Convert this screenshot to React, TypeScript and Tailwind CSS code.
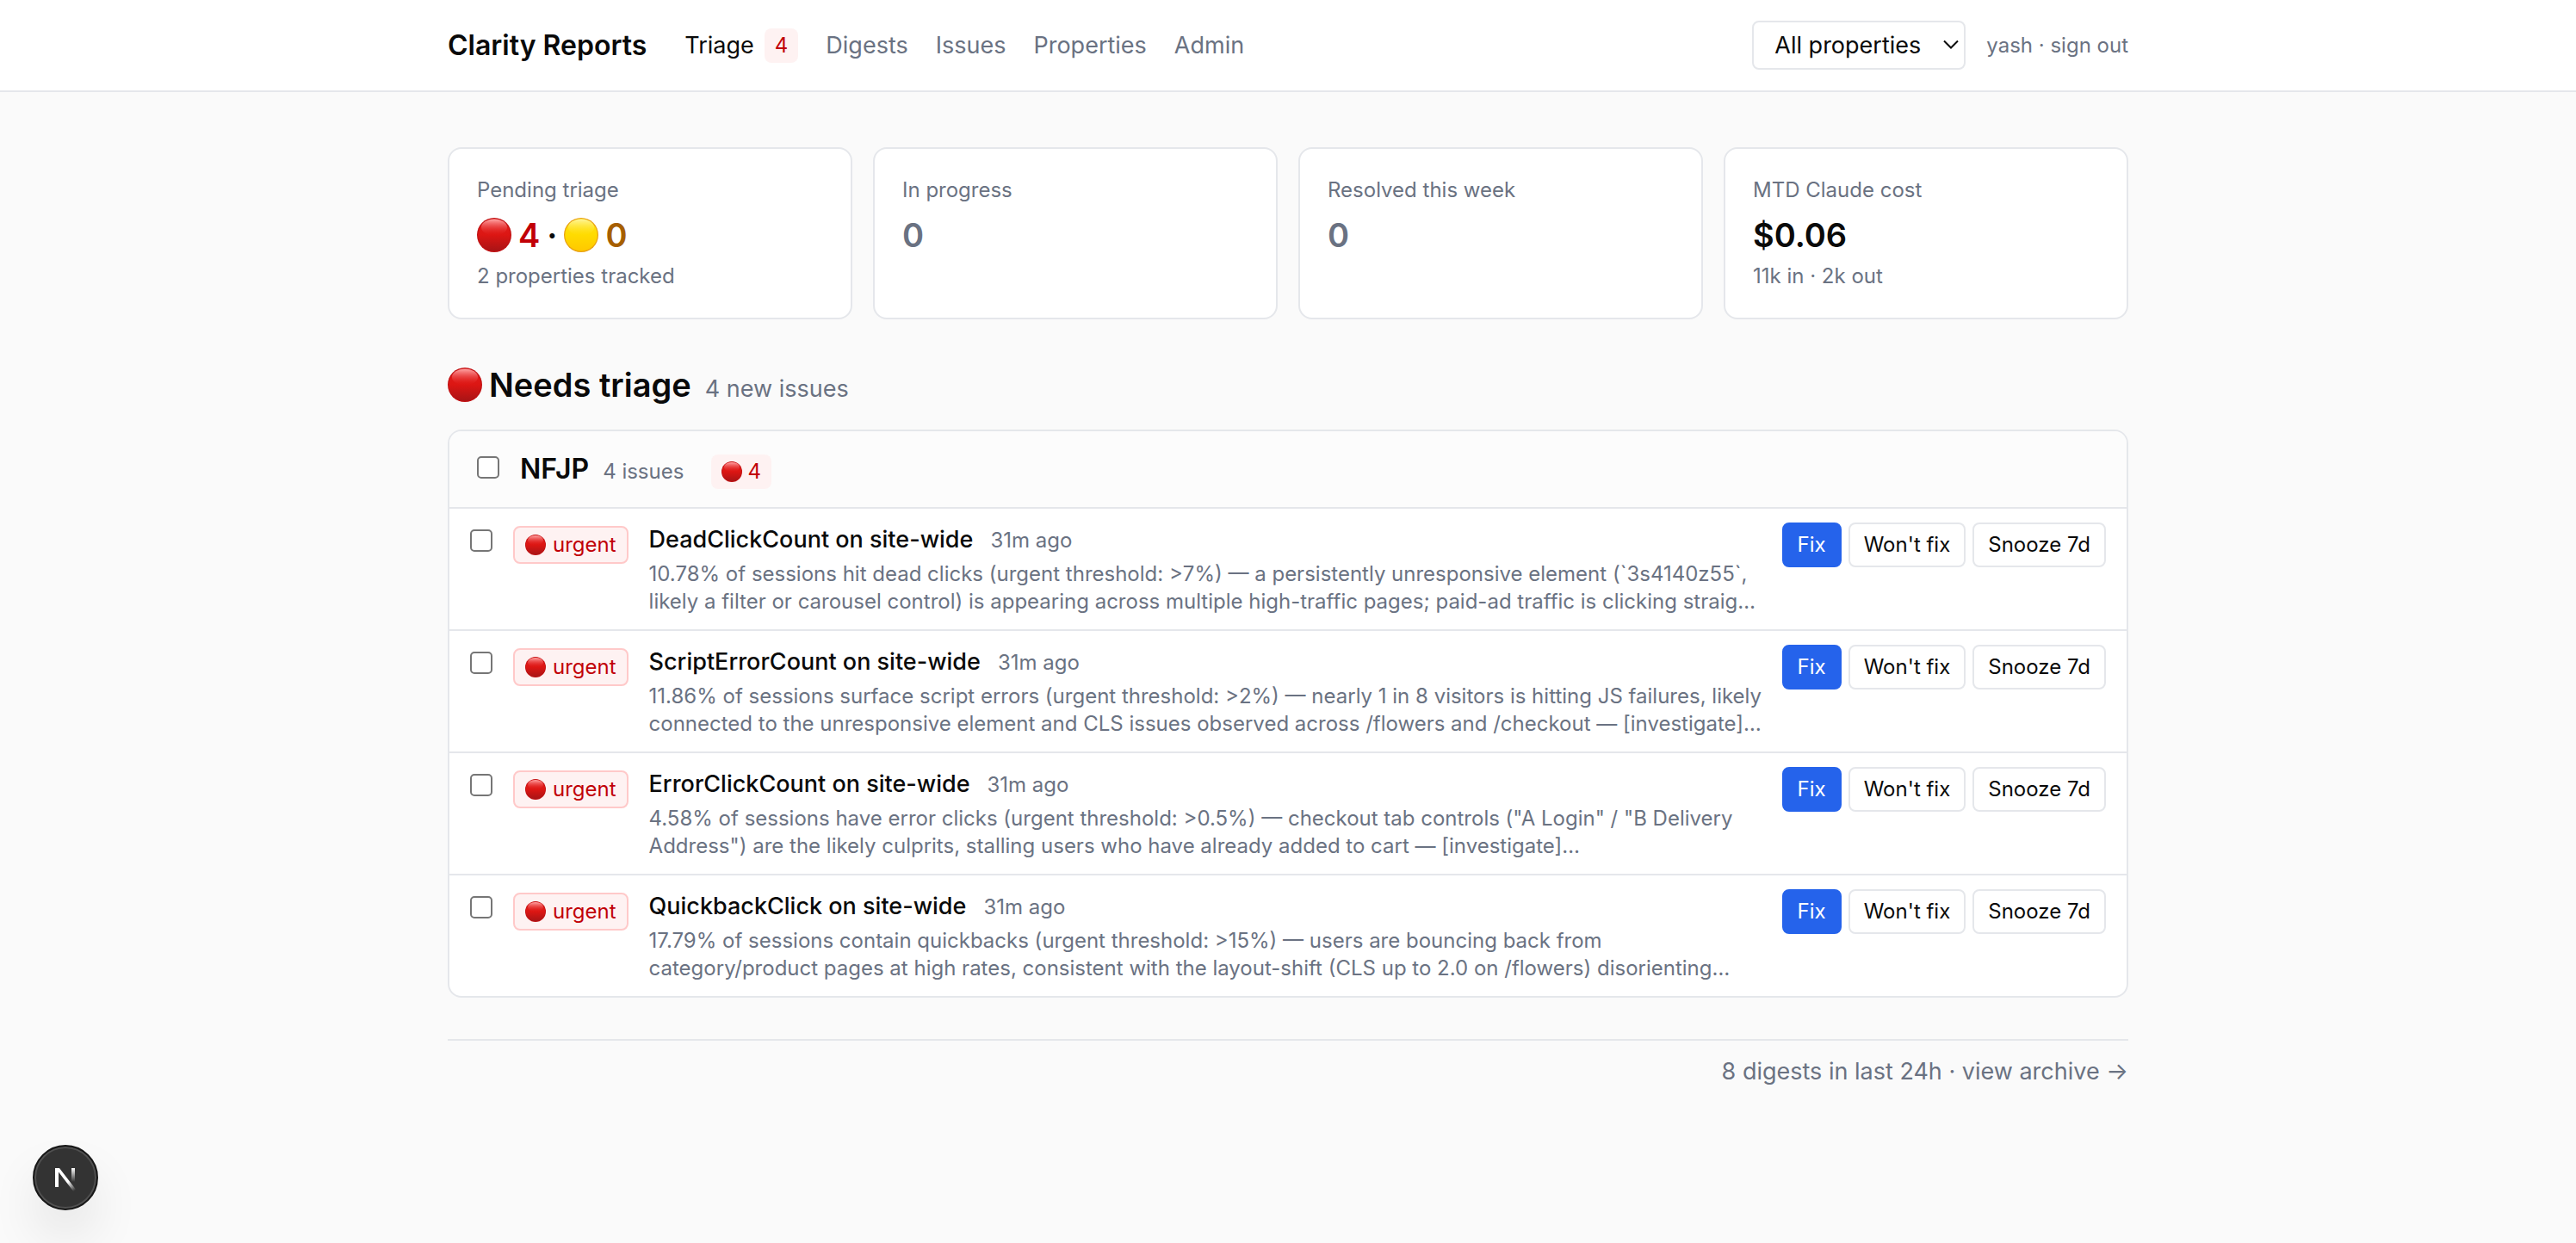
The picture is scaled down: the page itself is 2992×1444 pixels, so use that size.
import { useState } from "react"
import { clsx } from "clsx"

type Issue = {
  id: string
  title: string
  age: string
  summary: string
}

const navLinks = ["Digests", "Issues", "Properties", "Admin"]

const issues: Issue[] = [
  {
    id: "dead-click",
    title: "DeadClickCount on site-wide",
    age: "31m ago",
    summary:
      "10.78% of sessions hit dead clicks (urgent threshold: >7%) — a persistently unresponsive element (`3s4140z55`,\nlikely a filter or carousel control) is appearing across multiple high-traffic pages; paid-ad traffic is clicking straig…",
  },
  {
    id: "script-error",
    title: "ScriptErrorCount on site-wide",
    age: "31m ago",
    summary:
      "11.86% of sessions surface script errors (urgent threshold: >2%) — nearly 1 in 8 visitors is hitting JS failures, likely\nconnected to the unresponsive element and CLS issues observed across /flowers and /checkout — [investigate]…",
  },
  {
    id: "error-click",
    title: "ErrorClickCount on site-wide",
    age: "31m ago",
    summary:
      '4.58% of sessions have error clicks (urgent threshold: >0.5%) — checkout tab controls ("A Login" / "B Delivery\nAddress") are the likely culprits, stalling users who have already added to cart — [investigate]…',
  },
  {
    id: "quickback",
    title: "QuickbackClick on site-wide",
    age: "31m ago",
    summary:
      "17.79% of sessions contain quickbacks (urgent threshold: >15%) — users are bouncing back from\ncategory/product pages at high rates, consistent with the layout-shift (CLS up to 2.0 on /flowers) disorienting…",
  },
]

function Dot({ color, className }: { color: "red" | "yellow"; className?: string }) {
  const red = color === "red"
  const id = red ? "dot-red" : "dot-yellow"
  return (
    <svg viewBox="0 0 40 40" className={clsx("shrink-0 self-center", className)} aria-hidden="true">
      <defs>
        <linearGradient id={id} x1="0" y1="0" x2="0" y2="1">
          <stop offset="0" stopColor={red ? "#e32020" : "#ffe21a"} />
          <stop offset="0.5" stopColor={red ? "#dc1613" : "#ffdb00"} />
          <stop offset="1" stopColor={red ? "#a81416" : "#ffc800"} />
        </linearGradient>
        <linearGradient id={id + "-shine"} x1="0" y1="0" x2="0" y2="1">
          <stop offset="0" stopColor={red ? "#ffa8a8" : "#fff59a"} />
          <stop offset="1" stopColor={red ? "#e32020" : "#ffe21a"} stopOpacity="0" />
        </linearGradient>
      </defs>
      <circle cx="20" cy="20" r="20" fill={red ? "#c01012" : "#e8a010"} />
      <circle cx="20" cy="20" r="18.8" fill={`url(#${id})`} />
      <ellipse cx="20" cy="11" rx="15" ry="9.5" fill={`url(#${id}-shine)`} />
    </svg>
  )
}

function Checkbox({ label, checked, onChange, className }: { label: string; checked: boolean; onChange: () => void; className?: string }) {
  return (
    <input
      type="checkbox"
      aria-label={label}
      checked={checked}
      onChange={onChange}
      className={clsx(
        "size-[26px] shrink-0 appearance-none rounded-[5px] border-2 border-[#767676] bg-white checked:border-blue-600 checked:bg-blue-600",
        className,
      )}
    />
  )
}

function StatCard({ label, children, note }: { label: string; children: React.ReactNode; note?: string }) {
  return (
    <div className="rounded-2xl border-2 border-gray-200 bg-white p-8">
      <div className="text-[24px] leading-8 text-gray-500">{label}</div>
      <div className="mt-2 flex h-14 items-center text-[38px] leading-14 font-semibold">{children}</div>
      {note && <div className="mt-1 text-[24px] leading-8 text-gray-500">{note}</div>}
    </div>
  )
}

function IssueRow({ issue, checked, onToggle }: { issue: Issue; checked: boolean; onToggle: () => void }) {
  const button = "rounded-lg border-2 px-4 py-2 text-[24px] leading-8 whitespace-nowrap"
  return (
    <li className="flex items-start gap-6 border-t-2 border-gray-200 px-6 py-4">
      <Checkbox label={`Select ${issue.title}`} checked={checked} onChange={onToggle} className="mt-2" />
      <span className="mt-1 flex items-baseline gap-2 rounded-lg border-2 border-red-200 bg-red-50 px-3 py-1 text-[24px] leading-8 text-red-700">
        <Dot color="red" className="size-6" />
        urgent
      </span>
      <div className="-mr-4 min-w-0 flex-1">
        <div className="flex items-baseline gap-5">
          <a href="#" className="text-[27px] leading-10 font-medium">
            {issue.title}
          </a>
          <span className="text-[24px] leading-8 text-gray-500">{issue.age}</span>
        </div>
        <p className="mt-1 text-[24px] leading-8 whitespace-pre-line text-gray-500">{issue.summary}</p>
      </div>
      <div className="flex gap-2">
        <button className={clsx(button, "border-[#2563eb] bg-[#2563eb] text-white")}>Fix</button>
        <button className={clsx(button, "border-gray-200 bg-white")}>Won't fix</button>
        <button className={clsx(button, "border-gray-200 bg-white")}>Snooze 7d</button>
      </div>
    </li>
  )
}

export default function App() {
  const [selected, setSelected] = useState<string[]>([])
  const allSelected = selected.length === issues.length

  const toggle = (id: string) => {
    setSelected(selected.includes(id) ? selected.filter((s) => s !== id) : [...selected, id])
  }

  return (
    <div className="min-h-screen bg-[#fafafa] font-['Inter',sans-serif] text-[#0a0a0a]">
      <header className="border-b-2 border-gray-200 bg-white">
        <div className="mx-auto flex max-w-[2048px] items-center px-12 py-6">
          <a href="#" className="text-[32px] leading-12 font-semibold">
            Clarity Reports
          </a>
          <nav className="ml-11 flex items-center gap-8 text-[27px] leading-10 text-gray-500">
            <a href="#" className="flex items-center gap-3 text-[#0a0a0a]">
              Triage
              <span className="rounded-lg bg-red-50 px-3 py-1 text-[24px] leading-8 text-red-700">4</span>
            </a>
            {navLinks.map((link) => (
              <a key={link} href="#">
                {link}
              </a>
            ))}
          </nav>
          <div className="relative ml-auto">
            <select
              aria-label="Property"
              className="block h-[57px] appearance-none rounded-lg border-2 border-gray-200 bg-white pr-[50px] pl-6 text-[27px] leading-10"
            >
              <option>All properties</option>
              <option>NFJP</option>
            </select>
            <svg
              viewBox="0 0 18 12"
              className="pointer-events-none absolute top-[22px] right-2 h-3 w-[18px]"
              fill="none"
              stroke="currentColor"
              strokeWidth="2"
              aria-hidden="true"
            >
              <path d="M1 1.5l8 8 8-8" />
            </svg>
          </div>
          <a href="#" className="ml-6 text-[24px] leading-8 text-gray-500">
            yash · sign out
          </a>
        </div>
      </header>

      <main className="mx-auto max-w-[2048px] px-12 pt-16 pb-16">
        <section className="grid grid-cols-4 gap-6">
          <StatCard label="Pending triage" note="2 properties tracked">
            <span className="flex items-center gap-2">
              <Dot color="red" className="size-10" />
              <span className="text-red-700">4</span>
              <span>·</span>
              <Dot color="yellow" className="size-10" />
              <span className="text-yellow-700">0</span>
            </span>
          </StatCard>
          <StatCard label="In progress">
            <span className="text-gray-500">0</span>
          </StatCard>
          <StatCard label="Resolved this week">
            <span className="text-gray-500">0</span>
          </StatCard>
          <StatCard label="MTD Claude cost" note="11k in · 2k out">
            $0.06
          </StatCard>
        </section>

        <section className="mt-12">
          <div className="flex items-baseline gap-4">
            <h2 className="flex items-baseline gap-2 text-[38px] leading-14 font-semibold">
              <Dot color="red" className="size-10" />
              Needs triage
            </h2>
            <span className="text-[27px] leading-10 text-gray-500">4 new issues</span>
          </div>

          <div className="mt-6 overflow-hidden rounded-2xl border-2 border-gray-200 bg-white">
            <div className="flex items-baseline bg-[#fcfcfc] px-8 py-5">
              <Checkbox
                label="Select all NFJP issues"
                checked={allSelected}
                onChange={() => setSelected(allSelected ? [] : issues.map((i) => i.id))}
              />
              <h3 className="ml-6 text-[32px] leading-12 font-semibold">NFJP</h3>
              <span className="ml-4 text-[24px] leading-8 text-gray-500">4 issues</span>
              <span className="ml-8 flex items-baseline gap-1.5 rounded-lg bg-red-50 px-3 py-1 text-[24px] leading-8 text-red-700">
                <Dot color="red" className="size-6" />4
              </span>
            </div>
            <ul>
              {issues.map((issue) => (
                <IssueRow key={issue.id} issue={issue} checked={selected.includes(issue.id)} onToggle={() => toggle(issue.id)} />
              ))}
            </ul>
          </div>
        </section>

        <footer className="mt-12 border-t-2 border-gray-200 pt-4 text-right text-[27px] leading-10 text-gray-500">
          <a href="#">8 digests in last 24h · view archive →</a>
        </footer>
      </main>

      {/* Dev tools badge */}
      <button
        aria-label="Open Next.js Dev Tools"
        className="fixed bottom-[38px] left-[38px] flex size-[76px] items-center justify-center rounded-full border-2 border-[#171717] bg-[#333333] shadow-[inset_0_0_0_2px_#505050,0_32px_64px_-16px_rgba(0,0,0,0.24)]"
      >
        <svg viewBox="0 0 28 30" className="mt-1 h-[30px] w-7" fill="none" aria-hidden="true">
          <defs>
            <linearGradient id="n-diag" x1="17" y1="18" x2="25" y2="28" gradientUnits="userSpaceOnUse">
              <stop stopColor="#fff" />
              <stop offset="1" stopColor="#fff" stopOpacity="0" />
            </linearGradient>
            <linearGradient id="n-bar" x1="23" y1="2" x2="23" y2="18" gradientUnits="userSpaceOnUse">
              <stop stopColor="#fff" />
              <stop offset="1" stopColor="#fff" stopOpacity="0" />
            </linearGradient>
          </defs>
          <path d="M2 24V2h5L27 28l-3 2L6 6.500v17.500z" fill="url(#n-diag)" />
          <path d="M21 2h4v16h-4z" fill="url(#n-bar)" />
        </svg>
      </button>
    </div>
  )
}
